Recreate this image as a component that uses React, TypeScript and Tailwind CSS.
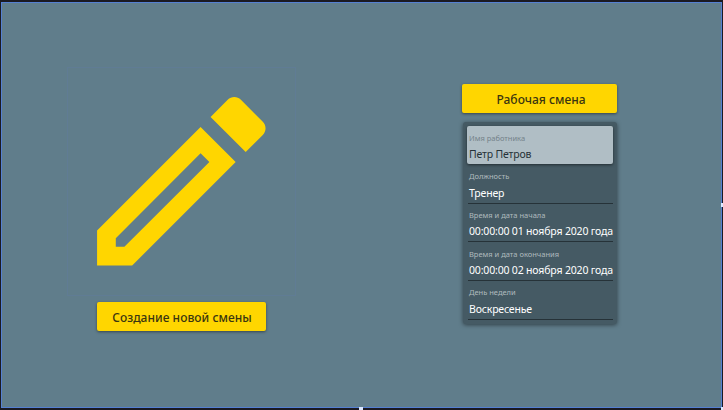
const fields = [
  { label: 'Должность', value: 'Тренер' },
  { label: 'Время и дата начала', value: '00:00:00 01 ноября 2020 года' },
  { label: 'Время и дата окончания', value: '00:00:00 02 ноября 2020 года' },
  { label: 'День недели', value: 'Воскресенье' },
];

function PencilIcon() {
  return (
    <svg viewBox="0 0 24 24" className="size-[224.6px] shrink-0" fill="#ffd600">
      <path d="M14.06,9L15,9.94L5.92,19H5V18.08L14.06,9M17.66,3C17.41,3 17.15,3.1 16.96,3.29L15.13,5.12L18.88,8.87L20.71,7.04C21.1,6.65 21.1,6 20.71,5.63L18.37,3.29C18.17,3.09 17.92,3 17.66,3M14.06,6.19L3,17.25V21H6.75L17.81,9.94L14.06,6.19Z" />
    </svg>
  );
}

export default function App() {
  return (
    <div className="relative h-[410px] w-[723px] overflow-hidden bg-[#1b1a22] pt-[2px] pl-px font-['Noto_Sans','Open_Sans',sans-serif]">
      <main className="flex h-[406px] w-[721px] items-start border border-[#5580d2] bg-[#607d8b]">
        <section className="ml-[65px] mt-[64px] flex w-[229px] flex-col items-start">
          <div className="flex size-[229px] items-center justify-center border border-[#607c94]">
            <PencilIcon />
          </div>
          <button className="mt-[6px] ml-[30px] flex h-[29px] w-[169px] items-center justify-center rounded-[2px] bg-[#ffd600] pt-[2px] pl-px text-[12px] font-medium tracking-[0.04px] whitespace-nowrap text-[#3a3510] shadow-[0_1px_3px_rgba(0,0,0,0.45)]">
            Создание новой смены
          </button>
        </section>

        <section className="ml-[166px] mt-[81px] w-[155px]">
          <button className="flex h-[29px] w-[155px] items-center justify-center rounded-[2px] bg-[#ffd600] pt-[2px] pl-[3px] text-[12px] font-medium whitespace-nowrap text-[#3a3510] shadow-[0_1px_3px_rgba(0,0,0,0.45)]">
            Рабочая смена
          </button>
          <div className="ml-px mt-[9px] h-[202px] w-[154px] rounded-[3px] bg-[#455a64] px-1 pt-[4px] shadow-[0_1px_4px_rgba(0,0,0,0.5)]">
            <div className="mb-px h-[38px] w-[146px] rounded-[2px] bg-[#b0bec5] pt-[7px] pl-[2px] whitespace-nowrap shadow-[0_1px_3px_rgba(0,0,0,0.5)]">
              <div className="h-[11px] text-[7.5px] leading-[11px] text-[#74828a]">Имя работника</div>
              <div className="mt-[3px] h-[15px] text-[10.5px] leading-[15px] tracking-[-0.17px] text-[#263238]">Петр Петров</div>
            </div>
            {fields.map((f) => (
              <div key={f.label} className="ml-px h-[38.7px] w-[145px] border-b border-[#263238] pt-[6.3px] pl-px whitespace-nowrap">
                <div className="h-[11px] text-[7.5px] leading-[11px] text-[#b0babf]">{f.label}</div>
                <div className="mt-[3.3px] h-[15px] text-[10.5px] leading-[15px] tracking-[-0.17px] text-white">{f.value}</div>
              </div>
            ))}
          </div>
        </section>
      </main>
      <span className="absolute top-[203px] left-[721px] size-[4px] bg-[#dce8ff]" />
      <span className="absolute top-[407px] left-[359px] size-[4px] bg-[#dce8ff]" />
      <span className="absolute top-[407px] left-[721px] size-[4px] bg-[#dce8ff]" />
    </div>
  );
}
